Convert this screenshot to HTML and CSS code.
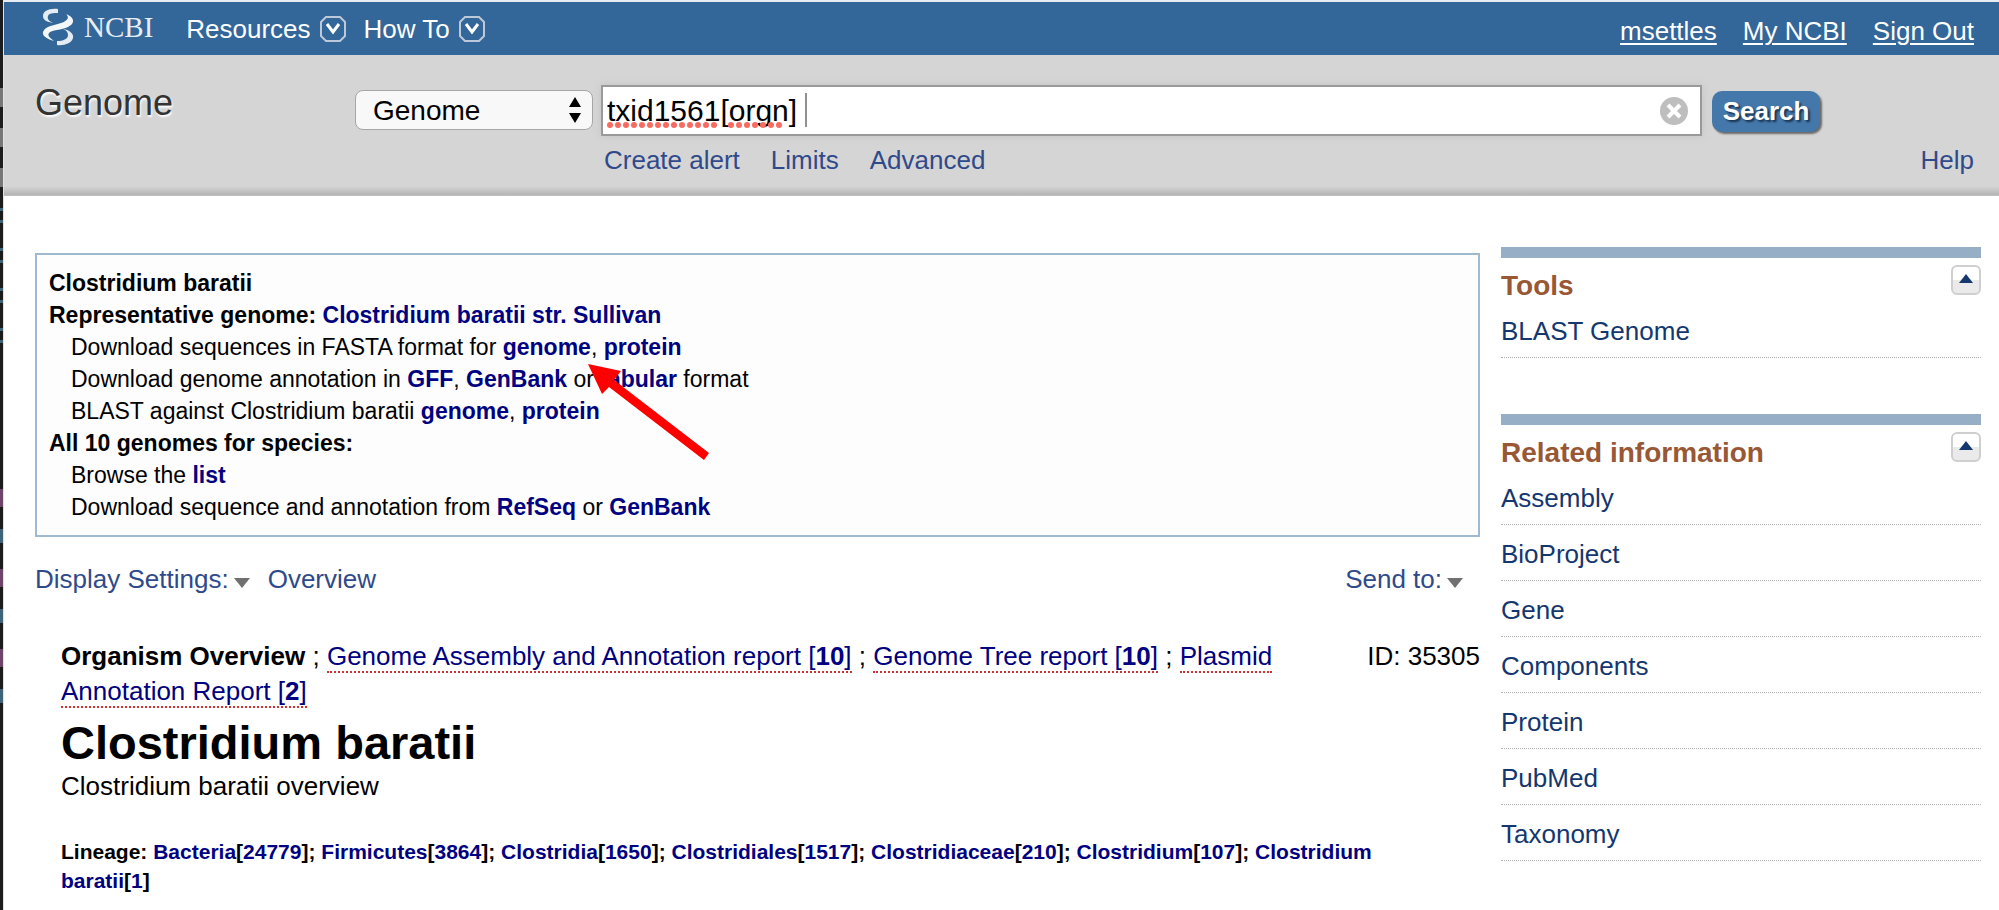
FILE: index.html
```
<!DOCTYPE html>
<html lang="en">
<head>
<meta charset="utf-8">
<title>Clostridium baratii - Genome - NCBI</title>
<link rel="stylesheet" href="styles.css">
</head>
<body>
<div class="edge" aria-hidden="true"></div>
<div class="page">
  <header class="topbar">
    <a class="logo" href="#" aria-label="NCBI home">
      <svg class="logo-mark" viewBox="0 0 32 38" aria-hidden="true">
        <path d="M16 1C7 0 1 3 1 8c0 4 4 6 10 7C7 13 5 11 6 8 7 5 11 5 16 5z" fill="#e4ebf2"/>
        <path d="M24 6c8 3 10 9 2 13-6 3-17 3-19 6-2 3 1 5 5 8C5 31 0 28 1 24c2-6 12-7 18-9 8-3 8-6 5-9z" fill="#f4f7fa"/>
        <path d="M21 21c7 1 11 5 10 9-1 5-9 8-16 7v-4c6 0 11-2 11-6 0-3-2-5-5-6z" fill="#e4ebf2"/>
      </svg>
      <span class="logo-name">NCBI</span>
    </a>
    <nav class="menus">
      <button class="menu" type="button">Resources
        <svg class="chev" viewBox="0 0 26 26" aria-hidden="true"><path d="M6 1h14l5 5v14l-5 5H6l-5-5V6z" fill="none" stroke="#bdc9d8" stroke-width="2"/><path d="M7 8l6 8 6-8" fill="none" stroke="#fff" stroke-width="3"/></svg>
      </button>
      <button class="menu" type="button">How To
        <svg class="chev" viewBox="0 0 26 26" aria-hidden="true"><path d="M6 1h14l5 5v14l-5 5H6l-5-5V6z" fill="none" stroke="#bdc9d8" stroke-width="2"/><path d="M7 8l6 8 6-8" fill="none" stroke="#fff" stroke-width="3"/></svg>
      </button>
    </nav>
    <nav class="account"><a href="#">msettles</a><a href="#">My NCBI</a><a href="#">Sign Out</a></nav>
  </header>

  <form class="search">
    <div class="db-name">Genome</div>
    <div class="db-pick">
      <select aria-label="Database"><option>Genome</option></select>
      <svg class="updown" viewBox="0 0 14 26" aria-hidden="true"><path d="M7 0l6 10H1zM7 26l6-10H1z"/></svg>
    </div>
    <div class="query">
      <div class="field">
        <input type="text" aria-label="Search term" value="txid1561[orgn] " spellcheck="false">
        <svg class="marks" viewBox="0 0 202 36" aria-hidden="true">
          <path d="M3 33H112M124 33H176" stroke="#fb6a60" stroke-width="6" stroke-linecap="round" stroke-dasharray="0 8"/>
          <path d="M199 1V35" stroke="#222"/>
        </svg>
        <button class="clear" type="button" aria-label="Clear"><svg viewBox="0 0 28 28" aria-hidden="true"><circle cx="14" cy="14" r="14" fill="#bebebe"/><path d="M8 8l12 12M20 8L8 20" stroke="#fff" stroke-width="4"/></svg></button>
      </div>
      <nav class="sublinks"><a href="#">Create alert</a><a href="#">Limits</a><a href="#">Advanced</a></nav>
    </div>
    <div class="actions">
      <button class="go" type="submit">Search</button>
      <a class="help" href="#">Help</a>
    </div>
  </form>

  <div class="columns">
    <main class="main">
      <section class="summary">
        <h2>Clostridium baratii</h2>
        <h3>Representative genome: <a href="#">Clostridium baratii str. Sullivan</a></h3>
        <p>Download sequences in FASTA format for <a href="#">genome</a>, <a href="#">protein</a></p>
        <p>Download genome annotation in <a href="#">GFF</a>, <a href="#">GenBank</a> or <a href="#">tabular</a> format</p>
        <p>BLAST against Clostridium baratii <a href="#">genome</a>, <a href="#">protein</a></p>
        <h3>All 10 genomes for species:</h3>
        <p>Browse the <a href="#">list</a></p>
        <p>Download sequence and annotation from <a href="#">RefSeq</a> or <a href="#">GenBank</a></p>
        <svg class="pointer" viewBox="0 0 124 96" aria-hidden="true"><path d="M0 0L33 7 26 16 121 89 116 96 21 23 14 30z" fill="#f00"/></svg>
      </section>

      <div class="settings">
        <button type="button">Display Settings:<svg class="tri" viewBox="0 0 16 10" aria-hidden="true"><path d="M0 0h16L8 10z" fill="#707070"/></svg></button>
        <button type="button">Overview</button>
        <button class="send" type="button">Send to:<svg class="tri" viewBox="0 0 16 10" aria-hidden="true"><path d="M0 0h16L8 10z" fill="#707070"/></svg></button>
      </div>

      <article class="report">
        <div class="tabs">
          <p><b>Organism Overview</b> ; <a href="#">Genome Assembly and Annotation report [<b>10</b>]</a> ; <a href="#">Genome Tree report [<b>10</b>]</a> ; <a href="#">Plasmid Annotation Report [<b>2</b>]</a></p>
          <span class="uid">ID: 35305</span>
        </div>
        <h1>Clostridium baratii</h1>
        <p class="lead">Clostridium baratii overview</p>
        <p class="lineage">Lineage: <a href="#">Bacteria</a>[<a href="#">24779</a>]; <a href="#">Firmicutes</a>[<a href="#">3864</a>]; <a href="#">Clostridia</a>[<a href="#">1650</a>]; <a href="#">Clostridiales</a>[<a href="#">1517</a>]; <a href="#">Clostridiaceae</a>[<a href="#">210</a>]; <a href="#">Clostridium</a>[<a href="#">107</a>]; <a href="#">Clostridium baratii</a>[<a href="#">1</a>]</p>
      </article>
    </main>

    <aside class="side">
      <section class="portlet">
        <div class="portlet-head"><h2>Tools</h2>
          <button class="fold" type="button" aria-label="Collapse Tools"><svg viewBox="0 0 14 9" aria-hidden="true"><path d="M7 0l7 9H0z" fill="#14376f"/></svg></button></div>
        <ul><li><a href="#">BLAST Genome</a></li></ul>
      </section>
      <section class="portlet">
        <div class="portlet-head"><h2>Related information</h2>
          <button class="fold" type="button" aria-label="Collapse Related information"><svg viewBox="0 0 14 9" aria-hidden="true"><path d="M7 0l7 9H0z" fill="#14376f"/></svg></button></div>
        <ul>
          <li><a href="#">Assembly</a></li>
          <li><a href="#">BioProject</a></li>
          <li><a href="#">Gene</a></li>
          <li><a href="#">Components</a></li>
          <li><a href="#">Protein</a></li>
          <li><a href="#">PubMed</a></li>
          <li><a href="#">Taxonomy</a></li>
        </ul>
      </section>
    </aside>
  </div>
</div>
</body>
</html>
```
FILE: styles.css
```
* { box-sizing: border-box; }
body {
  margin: 0;
  display: flex;
  min-height: 100vh;
  background: #fff;
  color: #000;
  font: 26px/35px "Liberation Sans", Arial, sans-serif;
}
h1, h2, h3, p, ul { margin: 0; padding: 0; }
ul { list-style: none; }
a { text-decoration: none; }
svg { display: block; }
button, input, select { font: inherit; color: inherit; margin: 0; }
button { background: none; border: 0; padding: 0; cursor: pointer; }

/* Sliver of the dark window behind the page */
.edge {
  flex: none;
  width: 3px;
  background:
    repeating-linear-gradient(#777 0 19px, #1c1c1c 19px 40px) 0 88px / 3px 110px no-repeat,
    repeating-linear-gradient(#3d6478 0 3px, #1c1c1c 3px 12px, #3d6478 12px 15px, #1c1c1c 15px 40px) 0 208px / 3px 138px no-repeat,
    repeating-linear-gradient(#70456a 0 18px, #1c1c1c 18px 40px, #3d6478 40px 54px, #1c1c1c 54px 80px) 0 489px / 3px 220px no-repeat,
    #1c1c1c;
}
.page { flex: 1; min-width: 0; border-top: 2px solid #e6ecf2; border-left: 1px solid #dfe3e8; }

/* Top bar */
.topbar {
  display: flex;
  align-items: center;
  height: 53px;
  padding: 0 25px 0 38px;
  background: #336699;
  color: #fff;
}
.logo { display: flex; gap: 10px; align-items: center; color: #e6edf4; margin-top: -4px; }
.logo-mark { width: 32px; height: 38px; }
.logo-name { font: 29px/32px "Liberation Serif", "Times New Roman", serif; }
.menus { display: flex; gap: 18px; margin-left: 33px; padding-top: 2px; }
.menu { display: flex; align-items: center; gap: 9px; }
.chev { width: 26px; height: 26px; margin-bottom: 2px; }
.account { display: flex; gap: 26px; margin-left: auto; padding-top: 6px; }
.account a { color: #fff; text-decoration: underline; text-underline-offset: 3px; text-decoration-thickness: 2px; }

/* Search band */
.search {
  display: flex;
  height: 141px;
  padding: 30px 25px 0 31px;
  background: linear-gradient(#d5d5d5 0, #d5d5d5 131px, #b5b5b5 140px, #c8c8c8 141px);
}
.db-name {
  width: 320px;
  font-size: 36px;
  line-height: 36px;
  color: #333;
  text-shadow: 1px 2px 2px #fff;
}
.db-pick { position: relative; width: 238px; height: 40px; margin-top: 5px; }
.db-pick select {
  appearance: none;
  width: 100%;
  height: 40px;
  padding: 0 17px;
  font-size: 28px;
  color: #000;
  background: #f8f8f8;
  border: 1px solid #a6a6a6;
  border-radius: 8px;
}
.updown { position: absolute; right: 11px; top: 7px; width: 14px; height: 26px; pointer-events: none; }
.query { flex: 1; margin-left: 8px; }
.field { position: relative; }
.field input {
  display: block;
  width: 100%;
  height: 51px;
  padding: 0 60px 0 4px;
  font-size: 30px;
  color: #000;
  background: #fff;
  border: 2px solid #9a9a9a;
  border-radius: 0;
  box-shadow: 0 0 8px #c4c4c4;
  outline: 0;
}
.marks { position: absolute; left: 6px; top: 7px; width: 202px; height: 36px; pointer-events: none; }
.clear { position: absolute; right: 14px; top: 12px; }
.clear svg { width: 28px; height: 28px; }
.sublinks { display: flex; gap: 31px; padding: 7px 0 0 3px; }
.sublinks a, .help { color: #2f4a8b; }
.actions { display: flex; flex-direction: column; width: 272px; padding: 6px 0 0 10px; }
.go {
  align-self: flex-start;
  width: 108px;
  height: 41px;
  font-weight: bold;
  line-height: 41px;
  color: #fff;
  background: #4477aa;
  border-radius: 10px;
  box-shadow: 2px 2px 2px #6a6a6a;
  text-shadow: 2px 2px 2px #1a3350;
}
.help { align-self: flex-end; margin-top: 11px; }

/* Two columns */
.columns { display: flex; gap: 21px; padding: 51px 18px 0 31px; }
.main { flex: 1; min-width: 0; padding-top: 6px; }
.side { flex: none; width: 480px; }

.summary {
  position: relative;
  padding: 12px;
  font-size: 23px;
  line-height: 32px;
  background: #fdfdfd;
  border: 2px solid #9fb9d0;
}
.summary h2, .summary h3 { font-size: 23px; line-height: 32px; }
.summary p { padding-left: 22px; }
.summary a { color: #000080; font-weight: bold; }
.pointer { position: absolute; left: 551px; top: 109px; width: 124px; height: 96px; }

.settings { display: flex; gap: 18px; padding: 25px 17px 0 0; color: #2f4a8b; }
.settings button { display: flex; align-items: center; gap: 5px; }
.settings .send { margin-left: auto; }
.tri { width: 16px; height: 10px; margin-top: 6px; }

.report { padding: 42px 0 0 26px; }
.tabs { display: flex; gap: 60px; justify-content: space-between; }
.tabs a { color: #000080; border-bottom: 2px dotted #cc3333; }
.uid { flex: none; }
.report h1 { margin-top: 8px; font-size: 47px; line-height: 52px; }
.lead { padding-top: 2px; line-height: 30px; }
.lineage { margin-top: 36px; padding-right: 60px; font-size: 21px; line-height: 29px; font-weight: bold; }
.lineage a { color: #000080; }

.portlet { border-top: 11px solid #97afc6; margin-bottom: 56px; }
.portlet-head { display: flex; justify-content: space-between; padding-top: 7px; }
.portlet h2 { padding-top: 5px; font-size: 28px; line-height: 32px; color: #985735; }
.fold {
  display: flex;
  justify-content: center;
  align-items: center;
  width: 30px;
  height: 30px;
  padding-bottom: 4px;
  border: 2px solid #cfcfcf;
  border-radius: 6px;
  background: linear-gradient(#fff 50%, #eaeaea 50%);
}
.fold svg { width: 14px; height: 9px; }
.portlet li { padding: 12px 0 8px; border-bottom: 1px dotted #b0b0b0; }
.portlet li a { color: #14376f; }
```
